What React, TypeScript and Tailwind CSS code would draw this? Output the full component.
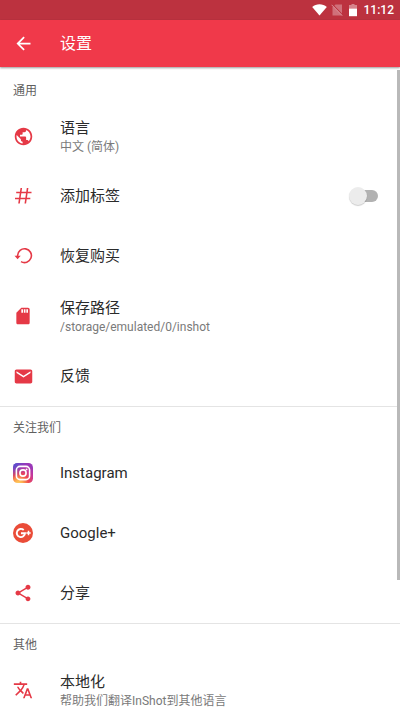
import React, { useState } from 'react';
import { MdArrowBack, MdEmail, MdPublic, MdSdCard, MdShare, MdTranslate } from 'react-icons/md';

const HashIcon = () => (
  <svg viewBox="0 0 20 20" className="size-5" fill="none" stroke="currentColor" strokeWidth="1.6">
    <path d="M8.3 2 6 17.5M14.6 2l-2.3 15.5M3.2 6.5h15.3M2 12.5h15.3" />
  </svg>
);

const RestoreIcon = () => (
  <svg viewBox="0 0 20 20" className="size-5" fill="none" stroke="currentColor" strokeWidth="1.6">
    <path d="M4.6 10.5V9.6a6.9 6.9 0 1 1 3.4 6" />
    <path d="M1.5 9.8h6.2l-3.1 3.4z" fill="currentColor" stroke="none" />
  </svg>
);

const InstagramIcon = () => (
  <svg viewBox="0 0 20 20" className="size-5">
    <defs>
      <radialGradient id="ig-warm" cx="0.28" cy="1.05" r="1.05">
        <stop offset="0" stopColor="#ffd566" />
        <stop offset="0.2" stopColor="#fdb04f" />
        <stop offset="0.48" stopColor="#f04a4d" />
        <stop offset="0.75" stopColor="#c8379a" />
        <stop offset="1" stopColor="#9a38b8" />
      </radialGradient>
      <radialGradient id="ig-cool" cx="0" cy="0" r="0.75">
        <stop offset="0" stopColor="#3f5ad6" />
        <stop offset="1" stopColor="#6a3fd0" stopOpacity="0" />
      </radialGradient>
    </defs>
    <rect width="20" height="20" rx="4.6" fill="url(#ig-warm)" />
    <rect width="20" height="20" rx="4.6" fill="url(#ig-cool)" />
    <g fill="none" stroke="#fff" strokeWidth="1.6">
      <rect x="3.4" y="3.4" width="13.2" height="13.2" rx="3.6" />
      <circle cx="10" cy="10" r="3.1" />
    </g>
    <circle cx="13.6" cy="6.4" r="0.95" fill="#fff" />
  </svg>
);

const GooglePlusIcon = () => (
  <svg viewBox="0 0 20 20" className="size-5">
    <circle cx="10" cy="10" r="10" fill="#ea4c38" />
    <path d="M10.7 7A4.1 4.1 0 1 0 12 10.2H8" fill="none" stroke="#fff" strokeWidth="1.9" />
    <path d="M15.5 7.8v4.4M13.3 10h4.4" stroke="#fff" strokeWidth="1.5" />
  </svg>
);

interface RowProps {
  icon: React.ReactNode;
  title: string;
  subtitle?: string;
}

const RowBody: React.FC<RowProps> = ({ icon, title, subtitle }) => (
  <>
    <span className="flex w-[21px] shrink-0 text-[#e53946]">{icon}</span>
    <span className="ml-[26px] flex min-w-0 flex-1 flex-col">
      <span className={subtitle ? 'pt-0.5 text-[15px] leading-5 text-[#2b2b2b]' : 'text-[15px] leading-5 text-[#2b2b2b]'}>
        {title}
      </span>
      {subtitle && <span className="truncate text-xs leading-[18px] text-[#7a7a7a]">{subtitle}</span>}
    </span>
  </>
);

const Row: React.FC<RowProps> = (props) => (
  <button type="button" className="flex h-[60px] w-full items-center px-[13px] text-left">
    <RowBody {...props} />
  </button>
);

const Section: React.FC<{ title: string; children: React.ReactNode }> = ({ title, children }) => (
  <section className="border-b border-[#e4e4e4] last:border-b-0">
    <h2 className="flex h-9 items-center px-[13px] pt-1.5 text-xs text-[#5f5f5f]">{title}</h2>
    {children}
  </section>
);

const StatusBar = () => (
  <div className="flex h-5 shrink-0 items-center justify-end bg-[#bc323f] pr-1.5 text-white">
    <svg viewBox="0 0 15 12" className="h-3 w-[15px]" fill="currentColor">
      <path d="M7.5 11.6.2 2.9C2.2 1.2 4.8.3 7.5.3s5.3.9 7.3 2.6z" />
    </svg>
    <svg viewBox="0 0 12 12" className="ml-1 size-3">
      <path d="M4.5.5H11v11H1.5v-8z" fill="#d0707a" />
      <path d="M1.8.8l10 10.4" stroke="#bc323f" strokeWidth="1.2" />
      <path d="M.6.8l10.6 10.8" stroke="#dc929a" />
    </svg>
    <svg viewBox="0 0 8 13" className="ml-1.5 h-[13px] w-2" fill="currentColor">
      <path d="M2.5 0h3v1H8v3.5H0V1h2.5z" opacity="0.4" />
      <path d="M0 4.5h8v7.7H0z" />
    </svg>
    <span className="ml-[7px] font-[Roboto] text-xs font-medium">11:12</span>
  </div>
);

const App: React.FC = () => {
  const [tagEnabled, setTagEnabled] = useState(false);

  return (
    <div className="flex h-screen flex-col overflow-hidden bg-white font-[Roboto,'Noto_Sans_CJK_SC',sans-serif]">
      <StatusBar />

      <header className="z-10 flex h-[47px] shrink-0 items-center bg-[#f0394a] px-[13px] text-white shadow-[0_1px_2px_rgba(0,0,0,0.4)]">
        <button type="button" aria-label="返回" className="flex w-[21px] justify-center">
          <MdArrowBack size={21} />
        </button>
        <h1 className="ml-[26px] text-base">设置</h1>
      </header>

      <div className="relative min-h-0 flex-1">
        <main className="h-full overflow-y-auto pt-[3px] [scrollbar-width:none]">
          <Section title="通用">
            <Row icon={<MdPublic size={21} />} title="语言" subtitle="中文 (简体)" />
            <label className="flex h-[60px] items-center pr-[22px] pl-[13px]">
              <RowBody icon={<HashIcon />} title="添加标签" />
              <input
                type="checkbox"
                role="switch"
                checked={tagEnabled}
                onChange={(e) => setTagEnabled(e.target.checked)}
                className="peer sr-only"
              />
              <span className="flex h-3 w-7 items-center rounded-full bg-[#b2b2b2] peer-checked:justify-end peer-checked:bg-[#f59aa2]">
                <span className="-ml-px size-[18px] shrink-0 rounded-full bg-[#ececec] shadow-[0_1px_1px_rgba(0,0,0,0.2)]" />
              </span>
            </label>
            <Row icon={<RestoreIcon />} title="恢复购买" />
            <Row icon={<MdSdCard size={20} />} title="保存路径" subtitle="/storage/emulated/0/inshot" />
            <Row icon={<MdEmail size={21} />} title="反馈" />
          </Section>

          <Section title="关注我们">
            <Row icon={<InstagramIcon />} title="Instagram" />
            <Row icon={<GooglePlusIcon />} title="Google+" />
            <Row icon={<MdShare size={20} />} title="分享" />
          </Section>

          <Section title="其他">
            <Row icon={<MdTranslate size={20} />} title="本地化" subtitle="帮助我们翻译InShot到其他语言" />
          </Section>
        </main>

        {/* Scroll position indicator */}
        <div className="absolute top-[3px] right-0 h-[79%] w-[3px] bg-[#b9b9b9]" />
      </div>
    </div>
  );
};

export default App;
